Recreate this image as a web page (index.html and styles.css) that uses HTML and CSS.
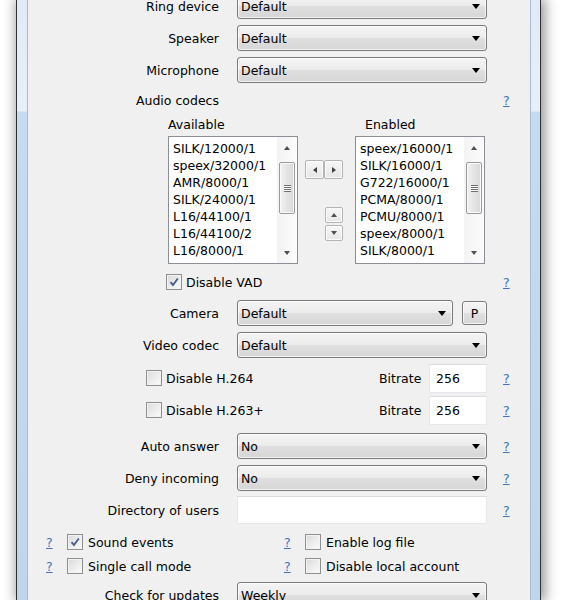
FILE: index.html
```html
<!DOCTYPE html>
<html>
<head>
<meta charset="utf-8">
<link rel="stylesheet" href="styles.css">
</head>
<body>
<div class="window">
  <div class="panel">
    <div class="form">
      <div class="row h26">
        <span class="label">Ring device</span>
        <div class="combo w250"><span class="val">Default</span><span class="arrow"></span></div>
      </div>
      <div class="row h26 mt6">
        <span class="label">Speaker</span>
        <div class="combo w250"><span class="val">Default</span><span class="arrow"></span></div>
      </div>
      <div class="row h26 mt6">
        <span class="label">Microphone</span>
        <div class="combo w250"><span class="val">Default</span><span class="arrow"></span></div>
      </div>
      <div class="row h20 mt7">
        <span class="label">Audio codecs</span>
        <a class="help">?</a>
      </div>
      <div class="row h20 mt4 lists-head">
        <span class="head-avail">Available</span>
        <span class="head-enabled">Enabled</span>
      </div>
      <div class="lists mt2">
        <div class="listbox">
          <div class="items">
            <div>SILK/12000/1</div>
            <div>speex/32000/1</div>
            <div>AMR/8000/1</div>
            <div>SILK/24000/1</div>
            <div>L16/44100/1</div>
            <div>L16/44100/2</div>
            <div>L16/8000/1</div>
            <div>L16/8000/2</div>
          </div>
          <div class="vscroll">
            <span class="sbtn"><span class="tri-up"></span></span>
            <span class="thumb"><span class="grip"></span></span>
            <span class="sbtn end"><span class="tri-down"></span></span>
          </div>
        </div>
        <div class="mid">
          <div class="pair">
            <span class="mbtn"><span class="tri-left"></span></span>
            <span class="mbtn"><span class="tri-right"></span></span>
          </div>
          <div class="updown">
            <span class="mbtn small"><span class="tri-up"></span></span>
            <span class="mbtn small"><span class="tri-down"></span></span>
          </div>
        </div>
        <div class="listbox">
          <div class="items">
            <div>speex/16000/1</div>
            <div>SILK/16000/1</div>
            <div>G722/16000/1</div>
            <div>PCMA/8000/1</div>
            <div>PCMU/8000/1</div>
            <div>speex/8000/1</div>
            <div>SILK/8000/1</div>
            <div>L16/16000/1</div>
          </div>
          <div class="vscroll">
            <span class="sbtn"><span class="tri-up"></span></span>
            <span class="thumb"><span class="grip"></span></span>
            <span class="sbtn end"><span class="tri-down"></span></span>
          </div>
        </div>
      </div>
      <div class="row h24 mt6">
        <div class="chk vad">
          <span class="cb checked"><svg width="12" height="12" viewBox="0 0 12 12"><path d="M2.5 6.2 L5 9 L9.8 2.5" fill="none" stroke="#4b5f8f" stroke-width="1.9"/></svg></span>
          <span class="cbtext">Disable VAD</span>
        </div>
        <a class="help">?</a>
      </div>
      <div class="row h26 mt6">
        <span class="label">Camera</span>
        <div class="combo w216"><span class="val">Default</span><span class="arrow"></span></div>
        <span class="pbtn">P</span>
      </div>
      <div class="row h26 mt6">
        <span class="label">Video codec</span>
        <div class="combo w250"><span class="val">Default</span><span class="arrow"></span></div>
      </div>
      <div class="row h30 mt5">
        <div class="chk h264">
          <span class="cb"></span>
          <span class="cbtext">Disable H.264</span>
        </div>
        <span class="bitrate">Bitrate</span>
        <div class="edit w58">256</div>
        <a class="help">?</a>
      </div>
      <div class="row h30 mt2">
        <div class="chk h264">
          <span class="cb"></span>
          <span class="cbtext">Disable H.263+</span>
        </div>
        <span class="bitrate">Bitrate</span>
        <div class="edit w58">256</div>
        <a class="help">?</a>
      </div>
      <div class="row h26 mt8">
        <span class="label">Auto answer</span>
        <div class="combo w250"><span class="val">No</span><span class="arrow"></span></div>
        <a class="help">?</a>
      </div>
      <div class="row h26 mt6">
        <span class="label">Deny incoming</span>
        <div class="combo w250"><span class="val">No</span><span class="arrow"></span></div>
        <a class="help">?</a>
      </div>
      <div class="row h28 mt5">
        <span class="label">Directory of users</span>
        <div class="edit w250 tall"></div>
        <a class="help">?</a>
      </div>
      <div class="opts mt7">
        <div class="opt"><a class="qhelp">?</a><span class="cb checked"><svg width="12" height="12" viewBox="0 0 12 12"><path d="M2.5 6.2 L5 9 L9.8 2.5" fill="none" stroke="#4b5f8f" stroke-width="1.9"/></svg></span><span class="cbtext">Sound events</span></div>
        <div class="opt"><a class="qhelp">?</a><span class="cb"></span><span class="cbtext">Enable log file</span></div>
        <div class="opt"><a class="qhelp">?</a><span class="cb"></span><span class="cbtext">Single call mode</span></div>
        <div class="opt"><a class="qhelp">?</a><span class="cb"></span><span class="cbtext">Disable local account</span></div>
      </div>
      <div class="row h26 mt5">
        <span class="label">Check for updates</span>
        <div class="combo w250"><span class="val">Weekly</span><span class="arrow"></span></div>
      </div>
    </div>
  </div>
</div>
</body>
</html>
```

FILE: styles.css
```css
html, body {
  margin: 0;
  padding: 0;
  background: #ffffff;
}
body {
  width: 564px;
  height: 600px;
  overflow: hidden;
  font-family: "DejaVu Sans", Verdana, sans-serif;
  font-size: 12.5px;
  color: #000;
}
.window {
  margin-left: 16px;
  width: 525px;
  height: 600px;
  box-sizing: border-box;
  border-left: 1px solid #2e3033;
  border-right: 1px solid #2e3033;
  padding: 0 9px 0 10px;
  background: linear-gradient(to bottom, #e1eaf5 0, #e8eff8 111px, #c6daf1 112px, #bfd5ee 100%);
  box-shadow: 2px 0 12px 2px rgba(0, 0, 0, 0.42);
}
.panel {
  width: 504px;
  height: 600px;
  box-sizing: border-box;
  border-left: 1px solid #a9bbd0;
  border-right: 1px solid #a9bbd0;
  background: #f0f0f0;
  overflow: hidden;
}
.form {
  margin-top: -7px;
  display: flex;
  flex-direction: column;
}
.row {
  display: flex;
  align-items: center;
}
.h20 { height: 20px; }
.h24 { height: 24px; }
.h26 { height: 26px; }
.h28 { height: 28px; }
.h30 { height: 30px; }
.mt2 { margin-top: 2px; }
.mt4 { margin-top: 4px; }
.mt5 { margin-top: 5px; }
.mt6 { margin-top: 6px; }
.mt7 { margin-top: 7px; }
.mt8 { margin-top: 8px; }

.label {
  width: 191px;
  margin-right: 18px;
  text-align: right;
  white-space: nowrap;
}
.help {
  margin-left: auto;
  width: 27px;
  color: #3f73b6;
  text-decoration: underline;
}
.combo {
  height: 26px;
  box-sizing: border-box;
  border: 1px solid #7a7a7a;
  border-radius: 3px;
  background: linear-gradient(to bottom, #f4f4f4 0%, #ececec 48%, #dfdfdf 52%, #d6d6d6 100%);
  box-shadow: inset 0 0 0 1px rgba(255, 255, 255, 0.7);
  display: flex;
  align-items: center;
  padding: 0 6px 0 3px;
}
.w250 { width: 250px; }
.w216 { width: 216px; }
.w58 { width: 58px; }
.combo .val {
  flex: 1;
}
.arrow {
  width: 0;
  height: 0;
  border-left: 4.5px solid transparent;
  border-right: 4.5px solid transparent;
  border-top: 5px solid #000;
}
.pbtn {
  width: 25px;
  height: 24px;
  margin-left: 9px;
  box-sizing: border-box;
  border: 1px solid #7a7a7a;
  border-radius: 3px;
  background: linear-gradient(to bottom, #f4f4f4 0%, #ececec 48%, #dfdfdf 52%, #d6d6d6 100%);
  box-shadow: inset 0 0 0 1px rgba(255, 255, 255, 0.7);
  display: flex;
  align-items: center;
  justify-content: center;
}
.edit {
  height: 29px;
  box-sizing: border-box;
  background: #fff;
  border: 1px solid #e6e8ec;
  border-top-color: #dadce2;
  padding: 0 6px;
  display: flex;
  align-items: center;
}
.edit.tall {
  height: 28px;
}

/* audio codec lists */
.lists-head {
  padding-left: 140px;
}
.head-avail {
  width: 197px;
}
.lists {
  display: flex;
  padding-left: 140px;
}
.listbox {
  width: 130px;
  height: 128px;
  box-sizing: border-box;
  border: 1px solid #8b9097;
  background: #fff;
  display: flex;
}
.items {
  flex: 1;
  padding: 3px 0 0 4px;
  line-height: 17px;
  overflow: hidden;
  white-space: nowrap;
}
.vscroll {
  width: 20px;
  display: flex;
  flex-direction: column;
  align-items: center;
  background: linear-gradient(to right, #f3f3f3, #fcfcfc);
}
.sbtn {
  height: 21px;
  width: 18px;
  display: flex;
  align-items: center;
  justify-content: center;
}
.sbtn.end {
  margin-top: auto;
}
.thumb {
  margin-top: 4px;
  width: 16px;
  height: 52px;
  box-sizing: border-box;
  border: 1px solid #9a9a9a;
  border-radius: 2px;
  background: linear-gradient(to right, #f2f2f2, #e4e4e4 50%, #d8d8d8);
  box-shadow: inset 0 0 0 1px #fafafa;
  display: flex;
  align-items: center;
  justify-content: center;
}
.grip {
  width: 7px;
  height: 7px;
  background: repeating-linear-gradient(to bottom, #6f6f6f 0, #6f6f6f 1px, #f8f8f8 1px, #f8f8f8 2px);
}
.tri-up, .tri-down, .tri-left, .tri-right {
  width: 0;
  height: 0;
}
.tri-up {
  border-left: 3.5px solid transparent;
  border-right: 3.5px solid transparent;
  border-bottom: 4px solid #505050;
}
.tri-down {
  border-left: 3.5px solid transparent;
  border-right: 3.5px solid transparent;
  border-top: 4px solid #505050;
}
.tri-left {
  border-top: 3.5px solid transparent;
  border-bottom: 3.5px solid transparent;
  border-right: 4px solid #404040;
}
.tri-right {
  border-top: 3.5px solid transparent;
  border-bottom: 3.5px solid transparent;
  border-left: 4px solid #404040;
}
.mid {
  width: 57px;
  padding-left: 7px;
  box-sizing: border-box;
}
.pair {
  display: flex;
  margin-top: 24px;
}
.mbtn {
  width: 19px;
  height: 19px;
  box-sizing: border-box;
  border: 1px solid #b4b4b4;
  border-radius: 2px;
  background: linear-gradient(to bottom, #f7f7f7, #e6e6e6);
  box-shadow: inset 0 0 0 1px #fbfbfb;
  display: flex;
  align-items: center;
  justify-content: center;
}
.updown {
  display: flex;
  flex-direction: column;
  gap: 2px;
  margin-left: 20px;
  margin-top: 28px;
}
.mbtn.small {
  width: 18px;
  height: 16px;
}

/* checkboxes */
.chk {
  display: flex;
  align-items: center;
}
.vad {
  padding-left: 138px;
}
.h264 {
  width: 351px;
  box-sizing: border-box;
  padding-left: 118px;
}
.cb {
  width: 16px;
  height: 16px;
  box-sizing: border-box;
  border: 1px solid #8e8f8f;
  background: linear-gradient(135deg, #d9d9d9 0%, #efefef 60%, #fbfbfb 100%);
  box-shadow: inset 0 0 0 1px #f3f3f3;
  display: flex;
  align-items: center;
  justify-content: center;
  flex: none;
}
.cbtext {
  margin-left: 4px;
  white-space: nowrap;
}
.bitrate {
  width: 50px;
}
.opts {
  display: grid;
  grid-template-columns: 238px auto;
  row-gap: 2px;
  padding-left: 18px;
}
.opt {
  height: 22px;
  display: flex;
  align-items: center;
}
.qhelp {
  width: 21px;
  color: #3f73b6;
  text-decoration: underline;
}
.opt .cbtext {
  margin-left: 5px;
}
```
